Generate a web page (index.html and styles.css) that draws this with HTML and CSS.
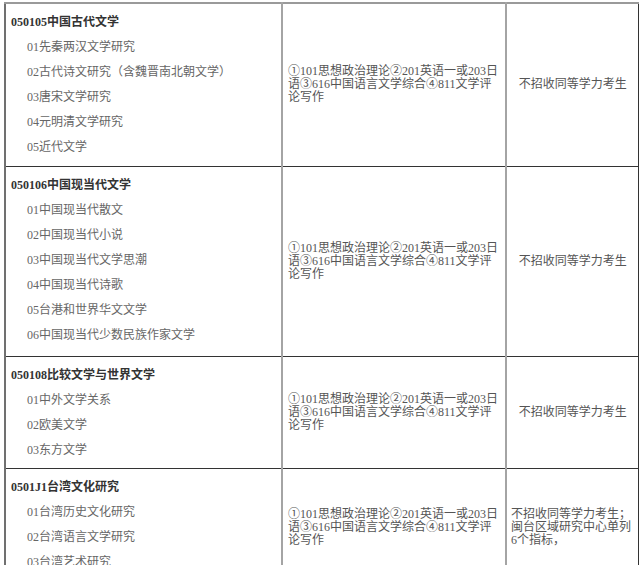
FILE: index.html
```html
<!DOCTYPE html>
<html lang="zh-CN">
<head>
<meta charset="utf-8">
<title>专业目录</title>
<link rel="stylesheet" href="styles.css">
</head>
<body>
<div class="page">
<table class="catalog">
  <colgroup>
    <col class="c-major">
    <col class="c-exam">
    <col class="c-note">
  </colgroup>
  <tr class="r1">
    <td class="major">
      <div class="head">050105中国古代文学</div>
      <div class="item">01先秦两汉文学研究</div>
      <div class="item">02古代诗文研究（含魏晋南北朝文学）</div>
      <div class="item">03唐宋文学研究</div>
      <div class="item">04元明清文学研究</div>
      <div class="item">05近代文学</div>
    </td>
    <td class="exam">①101思想政治理论②201英语一或203日语③616中国语言文学综合④811文学评论写作</td>
    <td class="note center">不招收同等学力考生</td>
  </tr>
  <tr class="r2">
    <td class="major">
      <div class="head">050106中国现当代文学</div>
      <div class="item">01中国现当代散文</div>
      <div class="item">02中国现当代小说</div>
      <div class="item">03中国现当代文学思潮</div>
      <div class="item">04中国现当代诗歌</div>
      <div class="item">05台港和世界华文文学</div>
      <div class="item">06中国现当代少数民族作家文学</div>
    </td>
    <td class="exam">①101思想政治理论②201英语一或203日语③616中国语言文学综合④811文学评论写作</td>
    <td class="note center">不招收同等学力考生</td>
  </tr>
  <tr class="r3">
    <td class="major">
      <div class="head">050108比较文学与世界文学</div>
      <div class="item">01中外文学关系</div>
      <div class="item">02欧美文学</div>
      <div class="item">03东方文学</div>
    </td>
    <td class="exam">①101思想政治理论②201英语一或203日语③616中国语言文学综合④811文学评论写作</td>
    <td class="note center">不招收同等学力考生</td>
  </tr>
  <tr class="r4">
    <td class="major">
      <div class="head">0501J1台湾文化研究</div>
      <div class="item">01台湾历史文化研究</div>
      <div class="item">02台湾语言文学研究</div>
      <div class="item">03台湾艺术研究</div>
    </td>
    <td class="exam">①101思想政治理论②201英语一或203日语③616中国语言文学综合④811文学评论写作</td>
    <td class="note left">不招收同等学力考生；闽台区域研究中心单列6个指标，</td>
  </tr>
</table>
</div>
</body>
</html>
```

FILE: styles.css
```css
html, body {
  margin: 0;
  padding: 0;
  background: #ffffff;
}

.page {
  padding: 2px 0 0 4px;
  font-family: "Liberation Serif", "Noto Sans CJK SC", serif;
  font-size: 12px;
  color: #555555;
}

.catalog {
  border-collapse: collapse;
  table-layout: fixed;
  width: 633px;
  border-top: 2px solid #9a9a9a;
  border-left: 2px solid #707070;
  border-right: 1px solid #333333;
}

.c-major { width: 277px; }
.c-exam { width: 224px; }
.c-note { width: 132px; }

.catalog td {
  border-top: 1px solid #333333;
  border-bottom: 1px solid #333333;
  padding: 0;
}

.catalog td + td {
  border-left: 2px solid #a4a4a4;
}

.r1 { height: 163px; }
.r2 { height: 190px; }
.r3 { height: 112px; }
.r4 { height: 119px; }

.major {
  vertical-align: top;
  padding: 6px 0 0 5px !important;
  line-height: 25px;
}

.head {
  font-weight: bold;
  color: #333333;
}

.item {
  padding-left: 16px;
  color: #666666;
}

.exam {
  vertical-align: middle;
  padding: 0 4px 0 5px !important;
  line-height: 13px;
  color: #555555;
}

.note {
  vertical-align: middle;
  line-height: 13px;
  color: #555555;
}

.center {
  text-align: center;
  padding: 0 4px 0 5px !important;
}

.left {
  text-align: left;
  padding: 0 5px 0 4px !important;
}
```
